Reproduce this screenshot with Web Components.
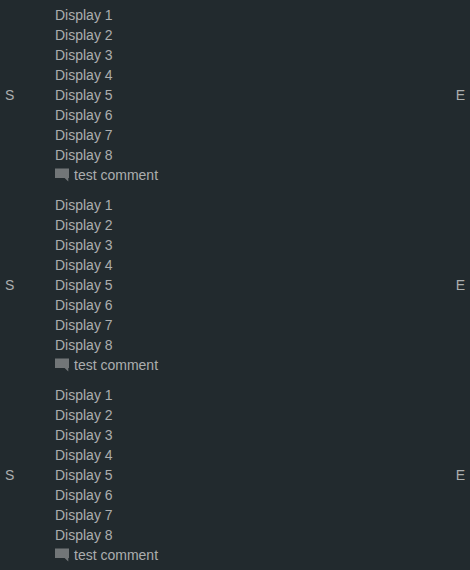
<!DOCTYPE html>
<html lang="en"><head><meta charset="utf-8"><title>Schedule</title>
<style>html,body{margin:0;background:#222a2e}body{height:570px;overflow:hidden;background:#222a2e;color:#acaeaf;font:14px/20px "Liberation Sans",Arial,sans-serif}</style></head>
<body><event-list></event-list>
<script>
customElements.define('comment-line', class extends HTMLElement {
  constructor(){super();this.attachShadow({mode:'open'}).innerHTML=`<style>:host{display:flex;gap:5px;height:20px}svg{display:block;width:14px;height:14px;margin-top:3px;flex:none;fill:#727678}</style><svg viewBox="0 0 14 14"><path d="M0 .5H14V10H13.3V13.5L9.6 10H0Z"/></svg><slot></slot>`;}
});
customElements.define('event-row', class extends HTMLElement {
  constructor(){super();this.attachShadow({mode:'open'}).innerHTML=`<style>:host{display:grid;grid-template-columns:50px 1fr auto;align-items:center;padding:5px;height:180px}.list{display:grid;grid-auto-rows:20px}</style><span>S</span><div class="list"><slot></slot></div><span>E</span>`;}
});
customElements.define('event-list', class extends HTMLElement {
  constructor(){super();const lines=Array.from({length:8},(_,i)=>`<div>Display ${i+1}</div>`).join('');
  const row=`<event-row>${lines}<comment-line>test comment</comment-line></event-row>`;
  this.attachShadow({mode:'open'}).innerHTML=`<style>:host{display:flex;flex-direction:column}</style>${row.repeat(3)}`;}
});
</script></body></html>
